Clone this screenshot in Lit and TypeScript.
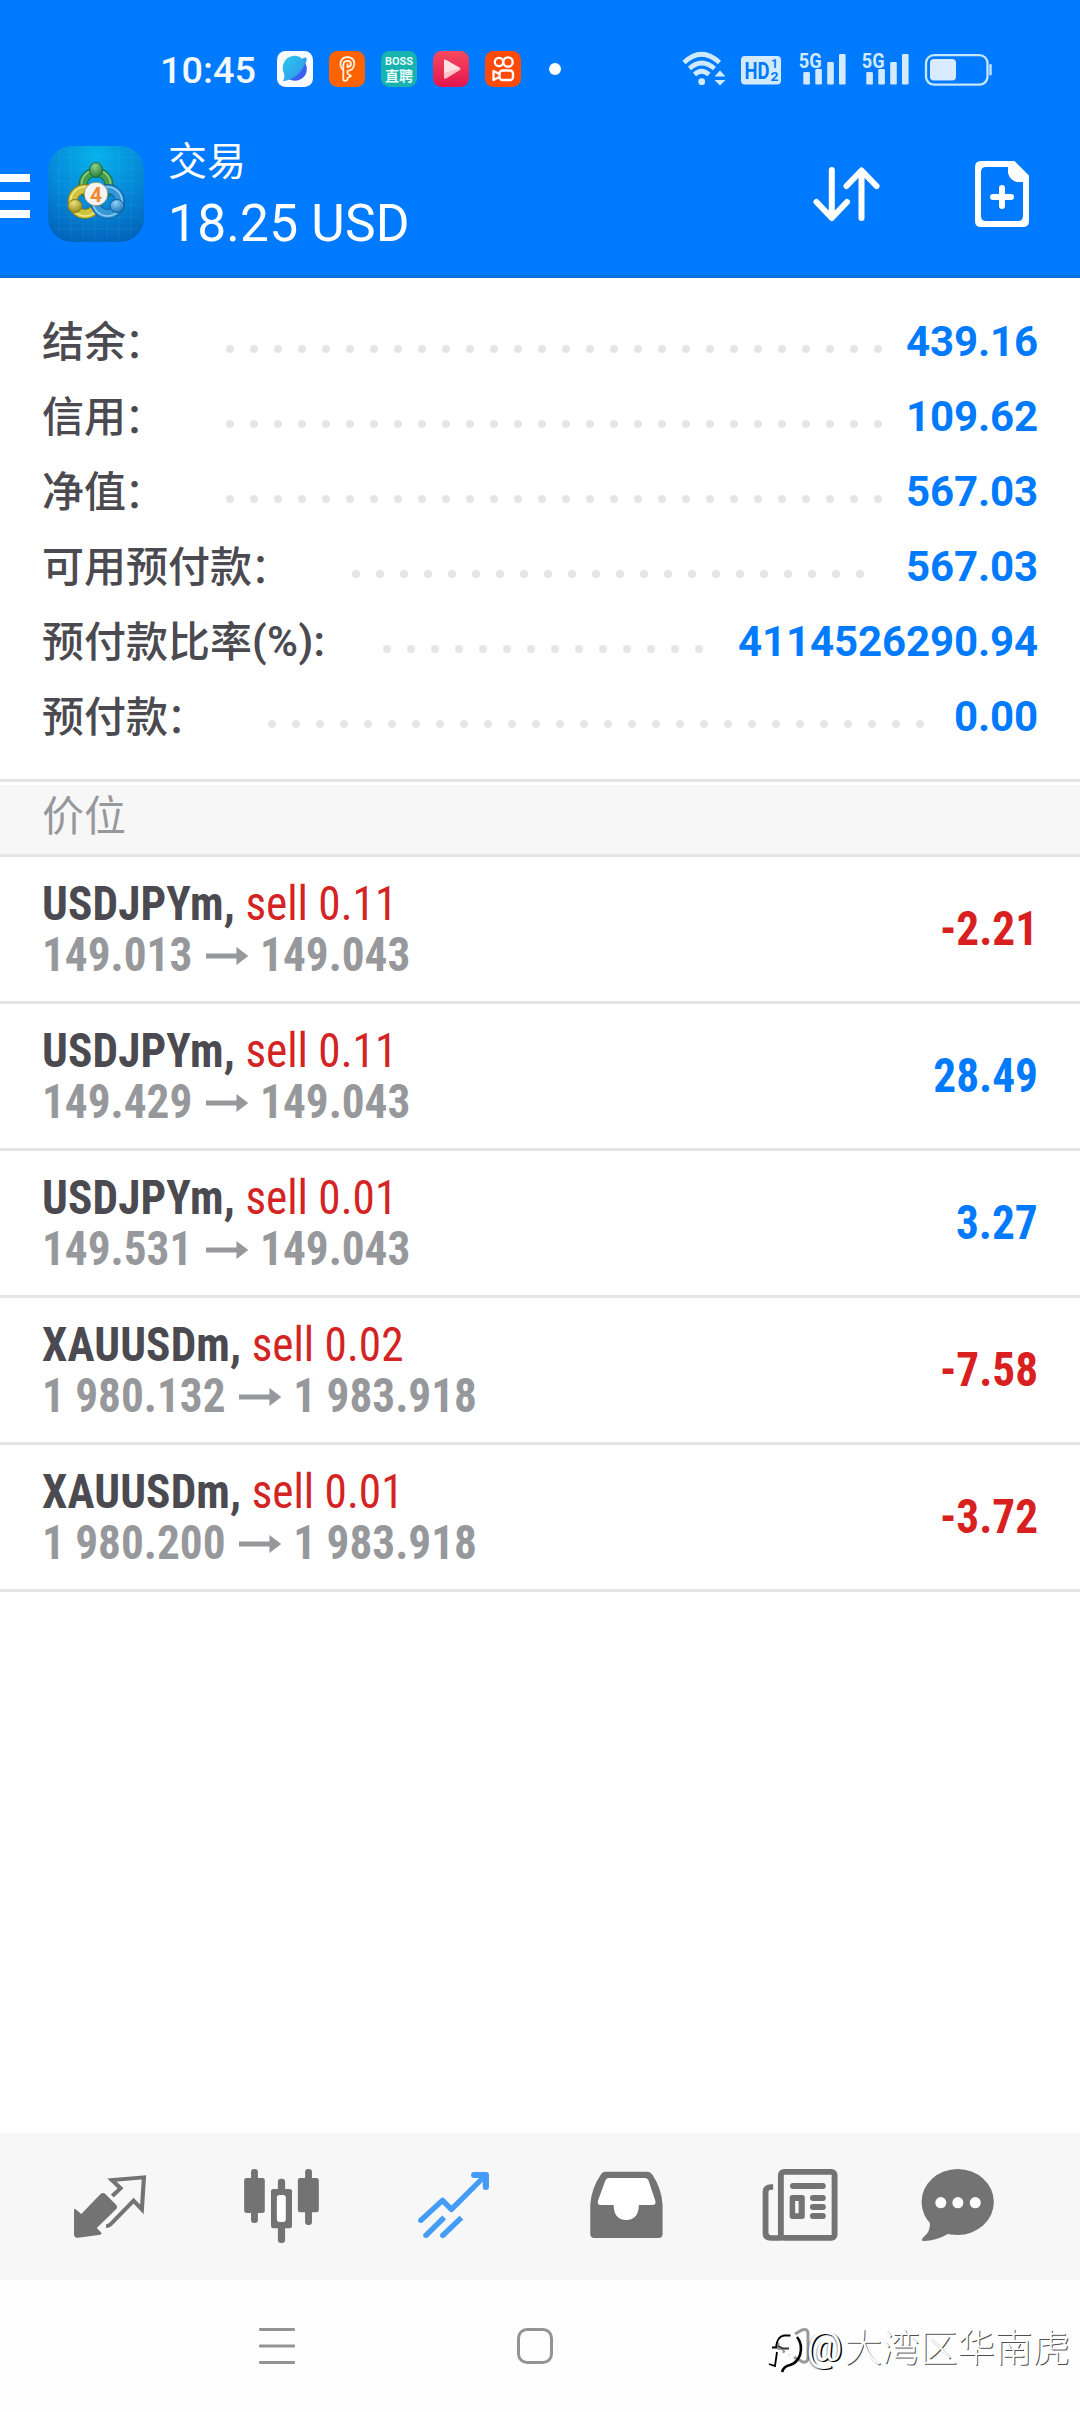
import { LitElement, html, svg, css } from "lit";
import { customElement, property } from "lit/decorators.js";
import { classMap } from "lit/directives/class-map.js";

interface Position {
  symbol: string;
  side: string;
  open: string;
  current: string;
  profit: string;
}

const SUMMARY: [string, string, string][] = [
  ["结余", "：", "439.16"],
  ["信用", "：", "109.62"],
  ["净值", "：", "567.03"],
  ["可用预付款", "：", "567.03"],
  ["预付款比率", "(%):", "4114526290.94"],
  ["预付款", "：", "0.00"],
];

const POSITIONS: Position[] = [
  { symbol: "USDJPYm,", side: "sell 0.11", open: "149.013", current: "149.043", profit: "-2.21" },
  { symbol: "USDJPYm,", side: "sell 0.11", open: "149.429", current: "149.043", profit: "28.49" },
  { symbol: "USDJPYm,", side: "sell 0.01", open: "149.531", current: "149.043", profit: "3.27" },
  { symbol: "XAUUSDm,", side: "sell 0.02", open: "1 980.132", current: "1 983.918", profit: "-7.58" },
  { symbol: "XAUUSDm,", side: "sell 0.01", open: "1 980.200", current: "1 983.918", profit: "-3.72" },
];

@customElement("status-bar")
export class StatusBar extends LitElement {
  static styles = css`
    :host {
      display: block;
    }
    .bar {
      box-sizing: border-box;
      display: flex;
      align-items: center;
      height: 130px;
      padding: 8px 0 0 160px;
      color: #f2f8ff;
    }
    .time {
      width: 117px;
      padding-top: 2px;
      font: 500 37.8px/44px Roboto, "Liberation Sans", sans-serif;
    }
    .apps {
      display: flex;
      gap: 16px;
    }
    .dot {
      width: 12px;
      height: 12px;
      margin-left: 28px;
      border-radius: 50%;
      background: #fff;
    }
    .system {
      margin-left: 121px;
      overflow: visible;
    }
    svg {
      display: block;
    }
    .boss {
      font: 700 10.5px Roboto, sans-serif;
    }
    .zhipin {
      font: 700 14px "Noto Sans CJK SC", sans-serif;
    }
    .hd {
      font: 700 23px Roboto, sans-serif;
    }
    .sub {
      font: 700 13.5px Roboto, sans-serif;
    }
    .net {
      font: 700 20px Roboto, sans-serif;
    }
  `;

  private signal(x: number) {
    return svg`<g transform="translate(${x} 0)" fill="#d3eafe">
      <text class="net" x="-1.2" y="16.5" textLength="22.800" lengthAdjust="spacingAndGlyphs">5G</text>
      <rect x="3.3" y="21" width="6.6" height="12.5" rx="1.2" />
      <rect x="15.3" y="18" width="6.6" height="15.5" rx="1.2" />
      <rect x="27.2" y="11" width="6.6" height="22.5" rx="1.2" />
      <rect x="39" y="3" width="6.6" height="30.5" rx="1.2" />
    </g>`;
  }

  render() {
    return html`
      <div class="bar">
        <div class="time">10:45</div>
        <div class="apps">
          <svg width="36" height="36" viewBox="0 0 36 36">
            <defs>
              <linearGradient id="planet" x1="0" y1="0" x2="1" y2="1">
                <stop offset="0" stop-color="#2ccbe8" /><stop offset="1" stop-color="#2f8ff0" />
              </linearGradient>
            </defs>
            <rect width="36" height="36" rx="8.5" fill="#f7fbff" />
            <circle cx="18" cy="18" r="11.8" fill="#3a5ff0" />
            <path d="M7 28 Q5 30 7 30 Q22 28 29 11 Q31 6 26 8.500 A11.800 11.800 0 0 0 7.500 23 Z" fill="url(#planet)" />
            <path d="M25 8 Q30 5 29.500 8.500 L28 13Z" fill="#2fa0ee" />
          </svg>
          <svg width="36" height="36" viewBox="0 0 36 36" fill="none" stroke="#fff1de" stroke-width="1.8">
            <rect width="36" height="36" rx="8.500" fill="#ff6200" stroke="none" />
            <path d="M14.300 19 Q11 16.500 11.500 11.500 Q13 6 18.500 6 Q25.300 6.500 25.300 13 Q24.500 19.500 18.500 19.800 V22.500 L22 25 L18.500 27 V28.500 Q16.500 31 14.300 29 V19" stroke-linejoin="round" />
            <path d="M14.300 19 V14 Q14.500 9.800 18.500 9.800 Q22 10 22 13 Q21.800 16 18.500 16 V12.500" />
          </svg>
          <svg width="36" height="36" viewBox="0 0 36 36" fill="#e8fbf8">
            <rect width="36" height="36" rx="8.500" fill="#17b3ae" />
            <text class="boss" x="4" y="14" textLength="28" lengthAdjust="spacingAndGlyphs">BOSS</text>
            <text class="zhipin" x="4" y="29.500" textLength="28" lengthAdjust="spacingAndGlyphs">直聘</text>
          </svg>
          <svg width="36" height="36" viewBox="0 0 36 36">
            <defs>
              <linearGradient id="play" x1="0" y1="0" x2="0" y2="1">
                <stop offset="0" stop-color="#f74a5e" /><stop offset="1" stop-color="#e3154f" />
              </linearGradient>
            </defs>
            <rect width="36" height="36" rx="8.500" fill="url(#play)" />
            <path d="M11 10 Q11 8 13 9 L27 17 Q28.500 18 27 19 L13 27.500 Q11 28.500 11 26.500Z" fill="#ffc3ca" />
            <path d="M11 10 Q11 8 13 9 L27 17 L11 22Z" fill="#ffe0e3" />
          </svg>
          <svg width="36" height="36" viewBox="0 0 36 36" fill="none" stroke="#fff" stroke-width="2.300">
            <rect width="36" height="36" rx="8.500" fill="#ff4a0a" stroke="none" />
            <circle cx="14" cy="11" r="4.200" />
            <circle cx="23" cy="11" r="4.700" />
            <rect x="14.500" y="19.500" width="13.500" height="9.500" rx="3" />
            <path d="M14.500 23 L8.500 20 V29 L14.500 26" stroke-linejoin="round" />
          </svg>
        </div>
        <div class="dot"></div>
        <svg class="system" width="312" height="36" viewBox="0 0 312 36">
          <g fill="none" stroke="#cfeafe" stroke-width="4.600">
            <path d="M2 11.500 Q19.500 -5 37.500 11.500" />
            <path d="M7.500 17.500 Q19.500 6.500 32.500 17.500" />
            <path d="M12.500 23.500 Q19.500 17 27 23.500" />
          </g>
          <g fill="#cfeafe">
            <circle cx="19.700" cy="30.700" r="3.400" />
            <path d="M38 19.500 L43.500 25.500 H32.500Z M38 34.500 L32.500 29 H43.500Z" />
          </g>
          <rect x="59" y="5" width="40" height="28.500" rx="4" fill="#d3eafe" />
          <g fill="#007aff">
            <text class="hd" x="62.500" y="27.500" textLength="25" lengthAdjust="spacingAndGlyphs">HD</text>
            <text class="sub" x="89" y="17" textLength="7" lengthAdjust="spacingAndGlyphs">1</text>
            <text class="sub" x="88.500" y="30" textLength="8" lengthAdjust="spacingAndGlyphs">2</text>
          </g>
          ${this.signal(118)} ${this.signal(181)}
          <rect x="244" y="4.200" width="61.500" height="29.500" rx="8" fill="none" stroke="#c5e6ff" stroke-width="2.300" />
          <rect x="248" y="8" width="26" height="21.500" rx="4" fill="#d9ecff" />
          <rect x="307.300" y="13" width="2.400" height="11.500" rx="1.200" fill="#c5e6ff" />
        </svg>
      </div>
    `;
  }
}

@customElement("app-header")
export class AppHeader extends LitElement {
  static styles = css`
    :host {
      display: block;
    }
    .bar {
      display: flex;
      align-items: flex-start;
      height: 145px;
      border-bottom: 3px solid #0a6fdc;
      color: #fff;
    }
    svg {
      display: block;
      flex: none;
    }
    .menu {
      margin-top: 44px;
    }
    .logo {
      margin: 16px 0 0 18px;
    }
    .titles {
      flex: 1;
      margin: 2px 0 0 24px;
      font-family: Roboto, "Noto Sans CJK SC", sans-serif;
      line-height: 60px;
    }
    .title {
      font-size: 39px;
    }
    .amount {
      padding-top: 2px;
      font-size: 51.500px;
      letter-spacing: 0.200px;
      white-space: nowrap;
    }
    .sort {
      margin: 34px 94px 0 0;
    }
    .order {
      margin: 31px 51px 0 0;
    }
    .four {
      font: 700 21px Roboto, sans-serif;
    }
  `;

  render() {
    const grid = [11, 23, 35, 47, 59, 71, 83];
    return html`
      <div class="bar">
        <svg class="menu" width="30" height="44" viewBox="0 0 30 44" fill="#fff">
          <rect width="30" height="8" /><rect y="18" width="30" height="8" /><rect y="36" width="30" height="8" />
        </svg>
        <svg class="logo" width="96" height="96" viewBox="0 0 96 96">
          <defs>
            <radialGradient id="sky" cx=".5" cy=".1" r=".95">
              <stop offset="0" stop-color="#06b2ea" /><stop offset=".5" stop-color="#058bd9" /><stop offset="1" stop-color="#0262ba" />
            </radialGradient>
            <radialGradient id="green" cx=".4" cy=".25" r=".8"><stop offset="0" stop-color="#8fd08a" /><stop offset="1" stop-color="#1f7a35" /></radialGradient>
            <radialGradient id="yellow" cx=".4" cy=".25" r=".8"><stop offset="0" stop-color="#eee37a" /><stop offset="1" stop-color="#8f8413" /></radialGradient>
            <radialGradient id="blue" cx=".4" cy=".25" r=".8"><stop offset="0" stop-color="#8fd2f7" /><stop offset="1" stop-color="#1672b8" /></radialGradient>
          </defs>
          <rect width="96" height="96" rx="24" fill="url(#sky)" />
          ${grid.map((p) => svg`<path d="M${p} 4 V92 M4 ${p} H92" stroke="#5cc4f2" stroke-opacity=".13" stroke-width="1" />`)}
          <g fill="none">
            <circle cx="48" cy="39" r="13" stroke="#1d6a31" stroke-width="9" />
            <circle cx="48" cy="39" r="13" stroke="#46a04b" stroke-width="7" />
            <circle cx="48" cy="38.500" r="14.500" stroke="#93cf8e" stroke-width="1.500" />
            <circle cx="37" cy="55.500" r="12.500" stroke="#857c18" stroke-width="10" />
            <circle cx="37" cy="55.500" r="12.500" stroke="#cfc43a" stroke-width="8" />
            <circle cx="37" cy="55.500" r="14.500" stroke="#efe98d" stroke-width="1.500" />
            <circle cx="59.500" cy="55.500" r="12.500" stroke="#125c98" stroke-width="10" />
            <circle cx="59.500" cy="55.500" r="12.500" stroke="#3596d8" stroke-width="8" />
            <circle cx="59.500" cy="55.500" r="14.500" stroke="#8fd0f4" stroke-width="1.500" />
          </g>
          <ellipse cx="48" cy="24" rx="6.500" ry="7.500" fill="url(#green)" stroke="#1d6a31" />
          <ellipse cx="27" cy="60" rx="7" ry="6.500" fill="url(#yellow)" stroke="#857c18" />
          <ellipse cx="69" cy="60" rx="7" ry="6.500" fill="url(#blue)" stroke="#125c98" />
          <circle cx="48" cy="48" r="11.800" fill="#f4f4f2" stroke="#7d8a70" stroke-width=".8" />
          <text class="four" x="42" y="55.500" fill="#f08a2e">4</text>
        </svg>
        <div class="titles">
          <div class="title">交易</div>
          <div class="amount">18.25 USD</div>
        </div>
        <svg class="sort" width="70" height="60" viewBox="0 0 70 60" fill="none" stroke="#fff" stroke-width="6" stroke-linecap="round" stroke-linejoin="round">
          <path d="M20.800 6 V53 M5.500 38 L20.800 54 L36 38" />
          <path d="M50.500 54 V7 M35.500 22 L50.500 6.500 L65.500 22" />
        </svg>
        <svg class="order" width="54" height="66" viewBox="0 0 54 66">
          <path d="M6 0 H39.500 L54 14.500 V60 Q54 66 48 66 H6 Q0 66 0 60 V6 Q0 0 6 0Z M11 6 Q6 6 6 11 V55 Q6 60 11 60 H43 Q48 60 48 55 V21 H42 C37 20 33 15 33 11 V6Z" fill="#fff" fill-rule="evenodd" />
          <path d="M27 27 V45 M18 36 H36" stroke="#fff" stroke-width="6" stroke-linecap="round" />
        </svg>
      </div>
    `;
  }
}

@customElement("account-summary")
export class AccountSummary extends LitElement {
  static styles = css`
    :host {
      display: block;
    }
    .list {
      padding: 26px 42px 25px;
      border-bottom: 3px solid #e4e4e4;
    }
    .row {
      display: flex;
      height: 75px;
      font: 500 42px/75px Roboto, "Noto Sans CJK SC", sans-serif;
      white-space: nowrap;
      color: #4b4a50;
    }
    .name {
      padding-top: 1px;
      line-height: 75px;
    }
    .colon {
      margin: 0 2px 0 -2px;
      padding-top: 2px;
      font-weight: 400;
    }
    .latin {
      font-weight: 600;
      letter-spacing: 0.400px;
    }
    .value {
      font-weight: 700;
      letter-spacing: -0.100px;
      color: #007aff;
    }
    .dots {
      display: flex;
      flex: 1;
      flex-wrap: wrap;
      gap: 16px;
      height: 8px;
      margin: 41px 20px 0 58px;
      overflow: hidden;
    }
    .dot {
      width: 8px;
      height: 8px;
      border-radius: 50%;
      background: #e6e6e6;
    }
  `;

  render() {
    return html`
      <div class="list">
        ${SUMMARY.map(
          ([name, tail, value]) => html`
            <div class="row">
              <span class="name">${name}</span>
              <span class=${tail === "：" ? "colon" : "latin"}>${tail}</span>
              <div class="dots">${Array.from({ length: 30 }, () => html`<i class="dot"></i>`)}</div>
              <span class="value">${value}</span>
            </div>
          `
        )}
      </div>
    `;
  }
}

@customElement("position-row")
export class PositionRow extends LitElement {
  @property({ attribute: false }) position!: Position;

  static styles = css`
    :host {
      display: block;
    }
    .row {
      display: flex;
      justify-content: space-between;
      height: 144px;
      padding: 0 42px;
      border-bottom: 3px solid #e4e4e4;
      font: 700 48px/51px "Roboto Condensed", Roboto, sans-serif;
      font-stretch: 75%;
      white-space: nowrap;
    }
    .info {
      padding-top: 21px;
      transform: scaleX(0.942);
      transform-origin: left;
    }
    .symbol {
      color: #4b4a50;
      letter-spacing: 0.150px;
    }
    .side {
      font-weight: 430;
      color: #d32323;
    }
    .prices {
      display: flex;
      color: #97989c;
    }
    .arrow {
      display: block;
      margin: 18px 13px 0 14px;
    }
    .profit {
      line-height: 144px;
      color: #007aff;
      transform: scaleX(0.943);
      transform-origin: right;
    }
    .loss {
      color: #d92020;
    }
  `;

  render() {
    const p = this.position;
    return html`
      <div class="row">
        <div class="info">
          <div><span class="symbol">${p.symbol}</span> <span class="side">${p.side}</span></div>
          <div class="prices">
            <span>${p.open}</span>
            <svg class="arrow" width="45" height="18" viewBox="0 0 43 18" preserveAspectRatio="none" fill="#97989c">
              <path d="M0 6.500 H31 V0 L43 9 L31 18 V11.500 H0Z" />
            </svg>
            <span>${p.current}</span>
          </div>
        </div>
        <div class=${classMap({ profit: true, loss: p.profit.startsWith("-") })}>${p.profit}</div>
      </div>
    `;
  }
}

@customElement("tab-bar")
export class TabBar extends LitElement {
  static styles = css`
    :host {
      display: block;
    }
    .bar {
      display: flex;
      height: 147px;
      padding: 0 24px;
      background: #f7f7f7;
    }
    svg {
      display: block;
      flex: none;
    }
  `;

  private cell(x: number, content: unknown) {
    return html`<svg width="172" height="147" viewBox="${x} 39 499.500 441" preserveAspectRatio="none" fill="#737373">${content}</svg>`;
  }

  render() {
    return html`
      <div class="bar">
        ${this.cell(69.7, svg`
          <path d="M215 269 Q216 265 220 268 L236 282 L292 222 Q299 216 306 222 L337 254 Q343 261 337 268 L281 324 L293 337 Q297 342 291 344 L227 353 Q215 355 215 343Z" />
          <path d="M326 228 L350 205 L325 180 L418 172 L412 268 L388 242 L322 312 Q316 319 308 318" fill="none" stroke="#737373" stroke-width="12" />
        `)}
        ${this.cell(569.2, svg`
          <rect x="709" y="174" width="60" height="105" rx="7" /><rect x="729" y="147" width="20" height="162" rx="9" />
          <rect x="865" y="174" width="61" height="103" rx="7" /><rect x="886" y="147" width="20" height="168" rx="9" />
          <rect x="807" y="176" width="21" height="193" rx="9" /><rect x="787" y="207" width="61" height="118" rx="7" />
          <rect x="804" y="225" width="26" height="81" rx="8" fill="#fff" />
        `)}
        ${this.cell(1068.7, svg`
          <g fill="none" stroke="#459cf6" stroke-width="16" stroke-linejoin="round">
            <path d="M1222 301 L1285 241 L1311 268 L1408 168" />
            <path d="M1377 165 H1411 V201" stroke-width="18" stroke-linecap="round" />
            <path d="M1237 346 L1290 292 M1286 346 L1340 293" />
          </g>
          <g fill="#459cf6"><circle cx="1222" cy="301" r="8" /><circle cx="1237" cy="346" r="8" /><circle cx="1286" cy="346" r="8" /></g>
        `)}
        ${this.cell(0, svg`
          <path d="M190 155 H310 Q321 155 327 165 Q353 205 356 255 V342 Q356 354 344 354 H158 Q146 354 146 342 V255 Q149 205 176 165 Q181 155 190 155Z" />
          <path d="M200 174 H305 Q311 174 315 181 L335 243 Q338 255 326 255 H287 Q287 299 250 300 Q214 299 214 255 H176 Q166 255 168 243 L190 181 Q194 174 200 174Z" fill="#fff" />
        `)}
        ${this.cell(499.5, svg`
          <g fill="none" stroke="#737373" stroke-width="17">
            <rect x="699.500" y="155.500" width="156" height="198" rx="9" />
            <path d="M677 201 H672 Q655 201 655 216 V340 Q655 354 671 354 H702" />
            <path d="M735 198 H821 M793 234 H821 M793 261 H821 M793 288 H821" stroke-width="18" stroke-linecap="round" />
          </g>
          <path fill-rule="evenodd" d="M733 225 H761 Q769 225 769 233 V289 Q769 297 761 297 H733 Q725 297 725 289 V233 Q725 225 733 225Z M741 243 V280 H751 V243Z" />
        `)}
        ${this.cell(999, svg`
          <ellipse cx="1213" cy="246" rx="105" ry="99" />
          <path d="M1132 305 Q1136 334 1112 353 Q1105 361 1114 363 Q1150 363 1190 339Z" />
          <g fill="#fff"><ellipse cx="1164" cy="248" rx="16" ry="17" /><ellipse cx="1213.500" cy="248" rx="16" ry="17" /><ellipse cx="1264" cy="248" rx="16" ry="17" /></g>
        `)}
      </div>
    `;
  }
}

@customElement("system-nav")
export class SystemNav extends LitElement {
  static styles = css`
    :host {
      display: block;
      position: relative;
    }
    .bar {
      display: flex;
      align-items: flex-start;
      height: 84px;
      padding: 48px 0 0 259px;
      background: #fefefe;
    }
    svg {
      display: block;
    }
    .home {
      margin-left: 222px;
    }
    .back {
      margin-left: 222px;
    }
    .mark {
      position: absolute;
      right: 10px;
      bottom: 39px;
      display: flex;
      align-items: center;
      font: 300 37.600px/50px Roboto, "Noto Sans CJK SC", sans-serif;
      color: #fff;
      white-space: nowrap;
      text-shadow: 1px 1px 0.500px rgba(0, 0, 0, 0.7);
    }
    .at {
      width: 38px;
      font-size: 40px;
      font-weight: 400;
      text-shadow: 1.500px 1px 0 #000, -1px 1px 1px rgba(0, 0, 0, 0.35);
    }
  `;

  render() {
    return html`
      <div class="bar">
        <svg width="36" height="36" viewBox="0 0 36 36" fill="#949494">
          <rect y="0" width="36" height="3" rx="1" /><rect y="16.500" width="36" height="3" rx="1" /><rect y="33" width="36" height="3" rx="1" />
        </svg>
        <svg class="home" width="36" height="36" viewBox="0 0 36 36" fill="none" stroke="#949494" stroke-width="3">
          <rect x="1.500" y="1.500" width="33" height="33" rx="8.500" />
        </svg>
        <svg class="back" width="36" height="36" viewBox="0 0 36 36" fill="none" stroke="#999" stroke-width="3">
          <path d="M20 6 L27 2 Q33 0 33 6 V29 Q33 35 28 34 L4 21 Q0 18 4 15" />
        </svg>
      </div>
      <div class="mark">
        <svg width="40" height="50" viewBox="0 0 40 50" fill="none">
          <g stroke="#fefefe" stroke-width="5">
            <path d="M13 27 Q12 42 7 44" /><path d="M15 18 Q18 15 23 15 Q30 18 27 28 Q24 38 14 43" /><path d="M24 25 L16 36" />
          </g>
          <path d="M11 23 L16 25.500 H22" stroke="#333" stroke-width="1.800" />
          <g stroke="#000" stroke-width="1.800">
            <path d="M5 24.500 H9 Q10 13.500 17 12.500 H23.500" /><path d="M10 29 L8 43 Q5 42 2 41" />
            <path d="M30 14 Q36 21 33 32 Q30 40 23 42 Q17 43 15 49" stroke-width="2.600" />
          </g>
        </svg>
        <span class="at">@</span><span>大湾区华南虎</span>
      </div>
    `;
  }
}

@customElement("app-root")
export class AppRoot extends LitElement {
  static styles = css`
    :host {
      display: block;
    }
    .screen {
      display: flex;
      flex-direction: column;
      width: 1080px;
      height: 2412px;
      overflow: hidden;
      background: #fff;
    }
    .top {
      background: #007aff;
    }
    .section {
      box-sizing: border-box;
      height: 72px;
      margin-top: 3px;
      padding: 0 42px;
      border-bottom: 3px solid #e4e4e4;
      background: #f7f7f7;
      color: #97989c;
      font: 400 42px/63px Roboto, "Noto Sans CJK SC", sans-serif;
    }
    .positions {
      flex: 1;
    }
  `;

  render() {
    return html`
      <div class="screen" lang="zh-CN">
        <div class="top">
          <status-bar></status-bar>
          <app-header></app-header>
        </div>
        <account-summary></account-summary>
        <div class="section">价位</div>
        <div class="positions">
          ${POSITIONS.map((p) => html`<position-row .position=${p}></position-row>`)}
        </div>
        <tab-bar></tab-bar>
        <system-nav></system-nav>
      </div>
    `;
  }
}
